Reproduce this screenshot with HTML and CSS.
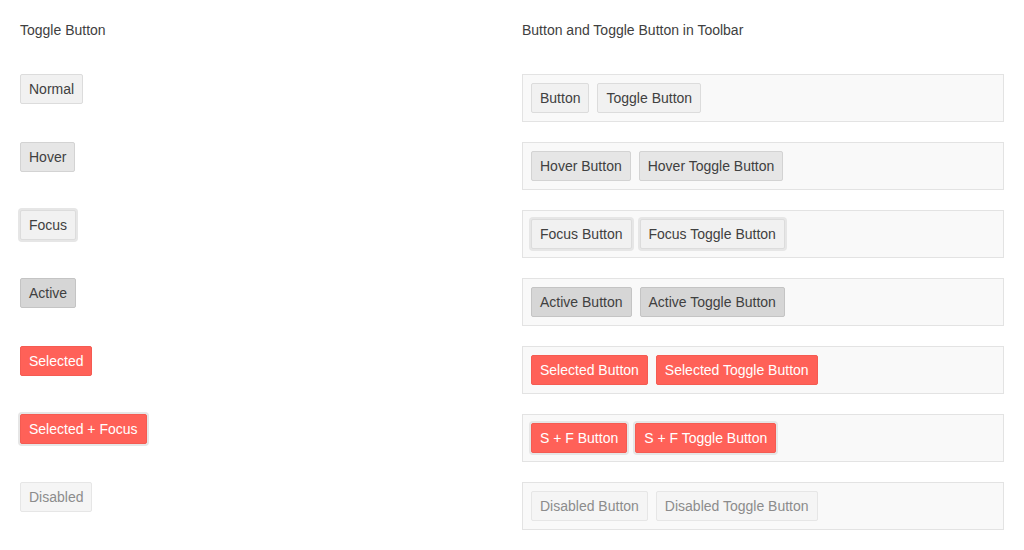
FILE: index.html
```html
<!DOCTYPE html>
<html>
<head>
<meta charset="utf-8">
<link rel="stylesheet" href="styles.css">
</head>
<body>
<div class="page">
  <section class="col">
    <h2 class="title">Toggle Button</h2>
    <div class="rows">
      <div class="row"><span class="btn">Normal</span></div>
      <div class="row"><span class="btn hover">Hover</span></div>
      <div class="row"><span class="btn focus">Focus</span></div>
      <div class="row"><span class="btn active">Active</span></div>
      <div class="row"><span class="btn selected">Selected</span></div>
      <div class="row"><span class="btn selected focus">Selected + Focus</span></div>
      <div class="row"><span class="btn disabled">Disabled</span></div>
    </div>
  </section>
  <section class="col">
    <h2 class="title">Button and Toggle Button in Toolbar</h2>
    <div class="rows">
      <div class="row toolbar"><span class="btn">Button</span><span class="btn">Toggle Button</span></div>
      <div class="row toolbar"><span class="btn hover">Hover Button</span><span class="btn hover">Hover Toggle Button</span></div>
      <div class="row toolbar"><span class="btn focus">Focus Button</span><span class="btn focus">Focus Toggle Button</span></div>
      <div class="row toolbar"><span class="btn active">Active Button</span><span class="btn active">Active Toggle Button</span></div>
      <div class="row toolbar"><span class="btn selected">Selected Button</span><span class="btn selected">Selected Toggle Button</span></div>
      <div class="row toolbar"><span class="btn selected focus">S + F Button</span><span class="btn selected focus">S + F Toggle Button</span></div>
      <div class="row toolbar"><span class="btn disabled">Disabled Button</span><span class="btn disabled">Disabled Toggle Button</span></div>
    </div>
  </section>
</div>
</body>
</html>
```
FILE: styles.css
```css
html, body {
  margin: 0;
  padding: 0;
  background: #fff;
}
body {
  font-family: "Liberation Sans", Arial, sans-serif;
  font-size: 14px;
  color: #404040;
}
.page {
  display: grid;
  grid-template-columns: 502px 482px;
  padding: 20px;
}
.title {
  margin: 0 0 34px 0;
  font-size: 14px;
  font-weight: normal;
  line-height: 20px;
  color: #404040;
}
.rows {
  display: flex;
  flex-direction: column;
  gap: 20px;
}
.row {
  height: 48px;
  box-sizing: border-box;
  display: flex;
  align-items: flex-start;
}
.toolbar {
  background: #f9f9f9;
  border: 1px solid #e3e3e3;
  padding: 8px;
  gap: 8px;
}
.btn {
  display: inline-block;
  padding: 4px 8px;
  line-height: 20px;
  border: 1px solid #dcdcdc;
  border-radius: 2px;
  background: #f1f1f1;
  color: #404040;
  white-space: nowrap;
}
.btn.hover {
  background: #e6e6e6;
  border-color: #d3d3d3;
}
.btn.focus {
  box-shadow: 0 0 0 2px #e6e6e6;
}
.btn.active {
  background: #d6d6d6;
  border-color: #c4c4c4;
}
.btn.selected {
  background: #ff6158;
  border-color: #f55b52;
  color: #fff;
}
.btn.disabled {
  background: #f5f5f5;
  border-color: #e6e6e6;
  color: #8c8c8c;
}
```
